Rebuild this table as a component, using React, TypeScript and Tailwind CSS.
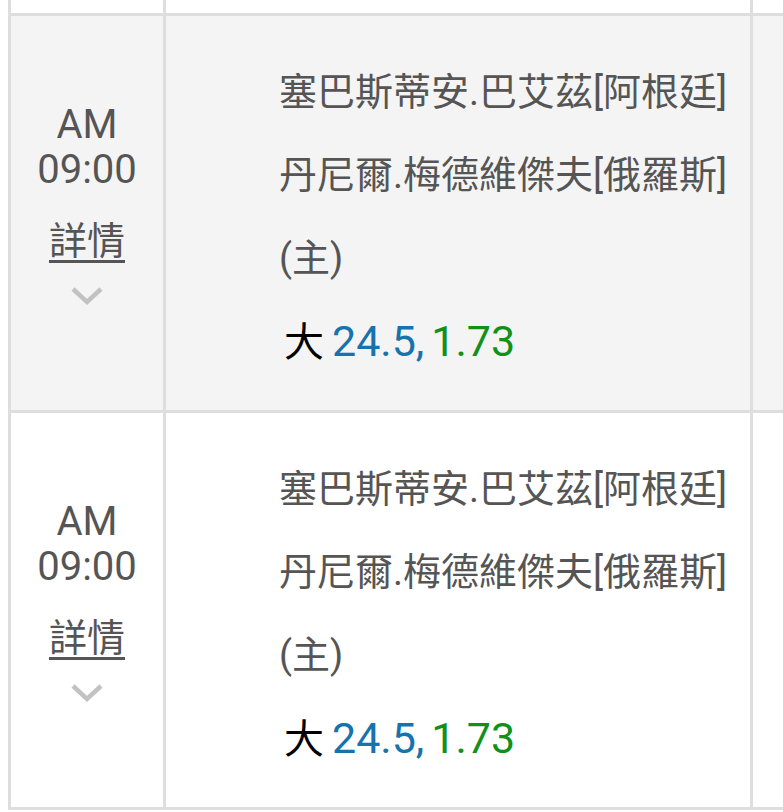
import React from "react";

const font = { fontFamily: 'Roboto, "Noto Sans CJK TC", sans-serif' };

function Chevron() {
  return (
    <svg width="34" height="20" viewBox="0 0 34 20" className="mt-[20px]">
      <path d="M3 3 L17 16 L31 3" fill="none" stroke="#c2c2c2" strokeWidth="4.5" />
    </svg>
  );
}

function MatchRow({ bg }: { bg: string }) {
  return (
    <div className={`flex h-[397px] border-b-[3px] border-[#dedede] ${bg}`}>
      <div className="w-[155px] shrink-0 border-r-[3px] border-[#dedede] flex flex-col items-center justify-center pb-[18px] text-[#555]">
        <div className="text-[40px] leading-[45px]">AM</div>
        <div className="text-[40px] leading-[45px]">09:00</div>
        <div className="text-[38px] leading-[50px] mt-[24px] underline underline-offset-[6px] decoration-[3px]">詳情</div>
        <Chevron />
      </div>
      <div className="w-[587px] shrink-0 border-r-[3px] border-[#dedede] pl-[113px] flex flex-col justify-center pt-[8px] text-[38px] leading-[83px] text-[#555]">
        <div className="whitespace-nowrap">塞巴斯蒂安.巴艾茲[阿根廷]</div>
        <div className="whitespace-nowrap">丹尼爾.梅德維傑夫[俄羅斯]</div>
        <div>(主)</div>
        <div className="pl-[5px] whitespace-nowrap text-[40px]">
          <span className="text-black">大</span>
          <span className="text-[#1673ac] ml-[8px] text-[43px]">24.5,</span>
          <span className="text-[#12901a] ml-[7px] text-[43px]">1.73</span>
        </div>
      </div>
      <div className="flex-1" />
    </div>
  );
}

export default function App() {
  return (
    <div className="w-[783px] h-[812px] overflow-hidden bg-white" style={font}>
      <div className="ml-[8px] border-l-[3px] border-[#dedede]">
        <div className="flex h-[16px] border-b-[3px] border-[#dedede]">
          <div className="w-[155px] shrink-0 border-r-[3px] border-[#dedede]" />
          <div className="w-[587px] shrink-0 border-r-[3px] border-[#dedede]" />
          <div className="flex-1" />
        </div>
        <MatchRow bg="bg-[#f4f4f4]" />
        <MatchRow bg="bg-white" />
      </div>
    </div>
  );
}
